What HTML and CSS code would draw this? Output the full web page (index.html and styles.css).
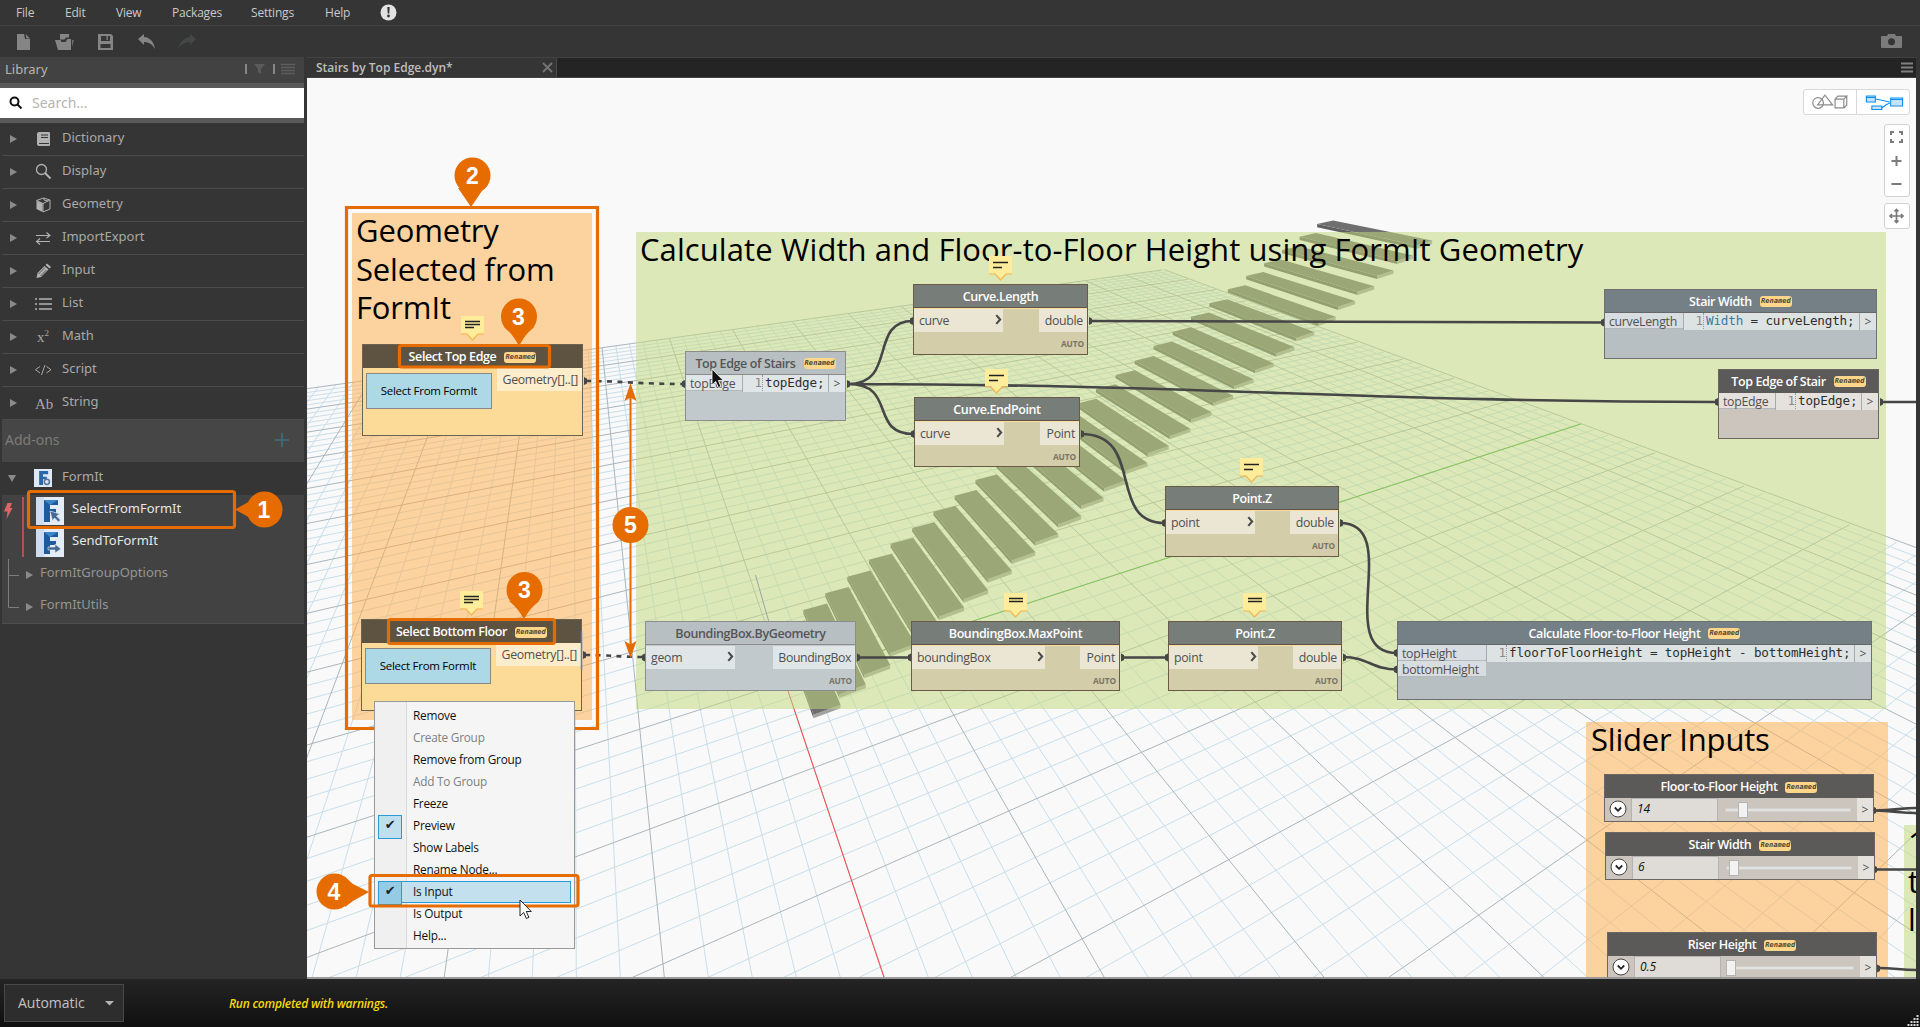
FILE: index.html
```html
<!DOCTYPE html>
<html lang="en">
<head>
<meta charset="utf-8">
<title>Dynamo - Stairs by Top Edge</title>
<link rel="stylesheet" href="styles.css">
</head>
<body>
<div class="app">
  <nav class="menubar">
    <span class="m-file">File</span><span class="m-edit">Edit</span><span class="m-view">View</span><span class="m-packages">Packages</span><span class="m-settings">Settings</span><span class="m-help">Help</span>
    <svg width="17" height="17" viewBox="0 0 17 17"><circle cx="8.500" cy="8.500" r="8" fill="#e2e2e2"/><path d="M7.300 3h2.400l-.4 6.400H7.700z" fill="#353535"/><circle cx="8.500" cy="12" r="1.400" fill="#353535"/></svg>
  </nav>
  <div class="toolbar">
    <svg width="210" height="31" viewBox="0 0 210 31" fill="#858585">
      <path d="M17 8h7l1 5h5v11H17z"/><path d="M25.500 8l4.500 4.500h-3.500z"/>
      <path d="M60 8h9v3.500h-3l-1.500 2H60z"/><path d="M55 14h5.500l1 2h4l2-3H71v11H58z"/><path d="M72 14h2l-2 7z" fill="#6d6d6d"/>
      <path d="M98 8h13l2 2v14H98z"/><path d="M101 10h9v5h-9zM100.500 18h10v4h-10z" fill="#353535"/><path d="M106.500 10h1.300v4h-1.300z"/>
      <path d="M138 13l6-5v3c6 .5 10 5 11 12-3-5-6-7-11-7v3z"/>
      <path d="M196 13l-6-5v3c-6 .5-10 5-12 12 3-5 7-7 12-7v3z" fill="#454747"/>
    </svg>
    <svg class="camera" width="22" height="15" viewBox="0 0 22 15"><path d="M0 3q0-1 1-1h5l1-2h7l1 2h5q1 0 1 1v10q0 1-1 1H1q-1 0-1-1z" fill="#7b7b7b"/><circle cx="10.500" cy="7.700" r="3.500" fill="#353535"/></svg>
  </div>
  <div class="middle">
    <aside class="sidebar">
      <div class="lib-head"><span>Library</span>
        <svg width="44" height="12" viewBox="0 0 44 12"><path d="M1 1v10M29 1v10" stroke="#a0a0a0" stroke-width="1.500"/><path d="M9 1h11l-4 5v5l-3-1.500V6z" fill="#5a5a5a"/></svg>
        <svg width="14" height="12" viewBox="0 0 14 12"><path d="M0 1.500h14M0 4.500h14M0 7.500h14M0 10.500h14" stroke="#5c5c5c" stroke-width="1.500"/></svg>
      </div>
      <div class="search"><svg width="14" height="14" viewBox="0 0 14 14" fill="none" stroke="#111" stroke-width="2"><circle cx="5.500" cy="5.500" r="4"/><path d="M8.500 8.500l4 4"/></svg><span>Search...</span></div>
      <ul class="cats">
        <li><i class="tri"></i><svg class="ic" viewBox="0 0 18 18"><path d="M4 2h10q1 0 1 1v12q0 1-1 1H4q-2 0-2-2V4q0-2 2-2z" fill="#b2b2b2"/><path d="M6 5h7M6 7.500h7M4 13.500h10" stroke="#353535"/></svg><b>Dictionary</b></li>
        <li><i class="tri"></i><svg class="ic" viewBox="0 0 18 18" fill="none" stroke="#b2b2b2"><circle cx="6.500" cy="6.500" r="5" stroke-width="1.300"/><path d="M10 10l5.500 5.500" stroke-width="2"/></svg><b>Display</b></li>
        <li><i class="tri"></i><svg class="ic" viewBox="0 0 18 18"><path d="M1.500 5l6 2.500v8.500l-6-3z" fill="#b2b2b2"/><path d="M1.500 4.500l7-2.500 6.500 2v9l-7 3V7.500zM8 7.500l7-3.500M9 2v2l4 1" fill="none" stroke="#b2b2b2"/></svg><b>Geometry</b></li>
        <li><i class="tri"></i><svg class="ic" viewBox="0 0 18 18" fill="none" stroke="#b2b2b2" stroke-width="1.100"><path d="M1 6.500h14M11.500 3.500l3.500 3-3.500 2.500M15 12.500H1.500M5 9.500l-3.500 3 3.500 3"/></svg><b>ImportExport</b></li>
        <li><i class="tri"></i><svg class="ic" viewBox="0 0 18 18" fill="#b2b2b2"><path d="M1.500 16l1-5 7-7 4 3.500-7.500 7.500z"/><path d="M10.500 3l1.500-1.500 4 3.500-1.500 1.500z"/><path d="M3.500 12l6.500-6.500M5.500 14l6-6" stroke="#353535" stroke-width=".7"/></svg><b>Input</b></li>
        <li><i class="tri"></i><svg class="ic" viewBox="0 0 18 18" stroke="#b2b2b2" stroke-width="1.600"><path d="M0 4h2M4 4h13M0 9h2M4 9h13M0 14h2M4 14h13"/></svg><b>List</b></li>
        <li><i class="tri"></i><em class="ic serif">x<sup>2</sup></em><b>Math</b></li>
        <li><i class="tri"></i><svg class="ic" viewBox="0 0 18 18" fill="none" stroke="#a8a8a8"><path d="M5 5.500L.5 8.700 5 12M11.500 5.500L16 8.700 11.500 12M10 4L6.500 14"/></svg><b>Script</b></li>
        <li><i class="tri"></i><em class="ic serif ab">Ab</em><b>String</b></li>
      </ul>
      <div class="addons"><span>Add-ons</span><svg width="14" height="14" viewBox="0 0 14 14"><path d="M7 0v14M0 7h14" stroke="#3f7080" stroke-width="1.600"/></svg></div>
      <div class="formit"><i class="tri down"></i>
        <svg width="18" height="18" viewBox="0 0 28 28"><rect width="28" height="28" fill="#dfe8f5"/><path d="M8 3h14v5h-8v4h6v4h-6v9H8z" fill="#2a68ab"/><circle cx="20" cy="20" r="4" fill="#dfe8f5" stroke="#5c7a9c" stroke-width="2.500"/></svg><b>FormIt</b></div>
      <div class="sub">
        <div class="leaf"><svg class="leaf-ic" viewBox="0 0 28 28"><rect width="28" height="28" fill="#e4ecf8"/><path d="M0 0h8v28H0z" fill="#cfdcf0"/><path d="M8 3h14v5h-8v4h6v4h-6v9H8z" fill="#1f5b9c"/><path d="M8 3h14l-8 5z" fill="#3d86c6"/><path d="M14 14l10 3-3.500 2 4 4-2 2-4-4-2 3z" fill="#47688f" stroke="#e4ecf8" stroke-width=".7"/></svg><b>SelectFromFormIt</b></div>
        <div class="leaf"><svg class="leaf-ic" viewBox="0 0 28 28"><rect width="28" height="28" fill="#e4ecf8"/><path d="M0 0h8v28H0z" fill="#cfdcf0"/><path d="M8 3h14v5h-8v4h6v4h-6v9H8z" fill="#1f5b9c"/><path d="M8 3h14l-8 5z" fill="#3d86c6"/><path d="M12 18h7v-3l6 5-6 4v-3h-7z" fill="#47688f" stroke="#e4ecf8" stroke-width=".6"/></svg><b>SendToFormIt</b></div>
        <div class="branch"><i class="tri"></i><b>FormItGroupOptions</b></div>
        <div class="branch"><i class="tri"></i><b>FormItUtils</b></div>
        <svg class="tree" width="30" height="128" viewBox="0 0 30 128"><path d="M7.500 8h4.500l-2 5h2.500L6.500 24l1-7.500H4z" fill="#e06464"/><path d="M23 2v60" stroke="#b25249" stroke-width="2"/><path d="M8.500 64v48.500H19M8.500 80.500H19" fill="none" stroke="#7d7d7d"/></svg>
      </div>
    </aside>
    <main class="workspace">
      <div class="tabs"><div class="tab"><span>Stairs by Top Edge.dyn*</span><svg width="11" height="11" viewBox="0 0 11 11"><path d="M1 1l9 9M10 1l-9 9" stroke="#757575" stroke-width="1.800"/></svg></div>
        <svg class="burger" width="12" height="11" viewBox="0 0 12 11"><path d="M0 1.500h12M0 5.500h12M0 9.500h12" stroke="#808080" stroke-width="1.800"/></svg></div>
      <div class="canvas">
        <svg class="layer" viewBox="307 78 1609 899">
          <g fill="none"><path id="minor" stroke="#c8deea"/><path id="major" stroke="#a9b6bd"/></g>
          <path d="M785 682L884.500 979" stroke="#ff4a4a" fill="none"/>
          <path d="M785 682L1581 424" stroke="#44b03a" fill="none"/>
          <path d="M786 682L755.500 575" stroke="#6868d8" fill="none"/>
          <g id="stairs"></g>
        </svg>
        <div class="world">
          <section class="group g-select"><h2>Geometry<br>Selected from<br>FormIt</h2></section>
          <section class="group g-calc"><h2>Calculate Width and Floor-to-Floor Height using FormIt Geometry</h2></section>
          <section class="group g-slider"><h2>Slider Inputs</h2></section>
          <section class="group g-edge"><h2>1<br>t<br>l</h2></section>
        </div>
        <svg class="layer" viewBox="307 78 1609 899" fill="none" stroke="#464646" stroke-width="2.600">
          <path stroke-dasharray="5 5.500" d="M586 381C620 381 640 384 684 384M585 655C610 655 620 657 644 657"/>
          <path d="M848 384C898 384 868 321 913 321M848 384C898 384 868 434 914 434M848 384C1180 384 1380 402 1718 402M1089 321C1270 321 1420 322.500 1604 322.500M1081 434C1146 434 1106 523 1165 523M857 657.500H911M1121 657.500H1168M1340 523C1404 523 1332 653 1397 653M1343 657C1368 657 1372 669.500 1397 669.500M1880 402H1916M1874 810.500C1895 810.500 1900 808 1916 808M1874 810.500C1895 811 1900 813 1916 813M1875 869.500H1916M1878 968C1895 968 1900 970 1916 970"/>
          <g id="dots" fill="#464646" stroke="none"></g>
        </svg>
        <div class="world">
          <article class="node select n-st"><h3>Select Top Edge<small>Renamed</small></h3><div class="sel"><button>Select From FormIt</button><span class="port">Geometry[]..[]</span></div></article>
          <article class="node select n-sb"><h3>Select Bottom Floor<small>Renamed</small></h3><div class="sel"><button>Select From FormIt</button><span class="port">Geometry[]..[]</span></div></article>
          <article class="node code frozen n-te"><h3>Top Edge of Stairs<small>Renamed</small></h3><div class="row"><div class="ins"><span>topEdge</span></div><pre><u>1</u>topEdge;</pre><span class="gt">&gt;</span></div></article>
          <article class="node fn n-cl"><h3>Curve.Length</h3><div class="ports"><span class="port in">curve<svg class="chev" viewBox="0 0 6 10"><path d="M1 1l3.500 4L1 9"/></svg></span><span class="port">double</span></div><footer>AUTO</footer></article>
          <article class="node fn n-ce"><h3>Curve.EndPoint</h3><div class="ports"><span class="port in">curve<svg class="chev" viewBox="0 0 6 10"><path d="M1 1l3.500 4L1 9"/></svg></span><span class="port">Point</span></div><footer>AUTO</footer></article>
          <article class="node fn n-p1"><h3>Point.Z</h3><div class="ports"><span class="port in">point<svg class="chev" viewBox="0 0 6 10"><path d="M1 1l3.500 4L1 9"/></svg></span><span class="port">double</span></div><footer>AUTO</footer></article>
          <article class="node fn frozen n-bg"><h3>BoundingBox.ByGeometry</h3><div class="ports"><span class="port in">geom<svg class="chev" viewBox="0 0 6 10"><path d="M1 1l3.500 4L1 9"/></svg></span><span class="port">BoundingBox</span></div><footer>AUTO</footer></article>
          <article class="node fn n-bm"><h3>BoundingBox.MaxPoint</h3><div class="ports"><span class="port in">boundingBox<svg class="chev" viewBox="0 0 6 10"><path d="M1 1l3.500 4L1 9"/></svg></span><span class="port">Point</span></div><footer>AUTO</footer></article>
          <article class="node fn n-p2"><h3>Point.Z</h3><div class="ports"><span class="port in">point<svg class="chev" viewBox="0 0 6 10"><path d="M1 1l3.500 4L1 9"/></svg></span><span class="port">double</span></div><footer>AUTO</footer></article>
          <article class="node code n-sw"><h3>Stair Width<small>Renamed</small></h3><div class="row"><div class="ins"><span>curveLength</span></div><pre><u>1</u><mark>Width</mark> = curveLength;</pre><span class="gt">&gt;</span></div></article>
          <article class="node code warm n-ts"><h3>Top Edge of Stair<small>Renamed</small></h3><div class="row"><div class="ins"><span>topEdge</span></div><pre><u>1</u>topEdge;</pre><span class="gt">&gt;</span></div></article>
          <article class="node code n-cf"><h3>Calculate Floor-to-Floor Height<small>Renamed</small></h3><div class="row"><div class="ins"><span>topHeight</span><span>bottomHeight</span></div><pre><u>1</u>floorToFloorHeight = topHeight - bottomHeight;</pre><span class="gt">&gt;</span></div></article>
          <article class="node slider n-s1"><h3>Floor-to-Floor Height<small>Renamed</small></h3><div class="row"><svg class="knob" viewBox="0 0 18 18"><circle cx="9" cy="9" r="8" fill="#fff" stroke="#444"/><path d="M5.800 7.500L9 10.800l3.200-3.300" fill="none" stroke="#222" stroke-width="1.800"/></svg><span class="val">14</span><div class="track t1"><i></i></div><span class="gt">&gt;</span></div></article>
          <article class="node slider n-s2"><h3>Stair Width<small>Renamed</small></h3><div class="row"><svg class="knob" viewBox="0 0 18 18"><circle cx="9" cy="9" r="8" fill="#fff" stroke="#444"/><path d="M5.800 7.500L9 10.800l3.200-3.300" fill="none" stroke="#222" stroke-width="1.800"/></svg><span class="val">6</span><div class="track t2"><i></i></div><span class="gt">&gt;</span></div></article>
          <article class="node slider n-s3"><h3>Riser Height<small>Renamed</small></h3><div class="row"><svg class="knob" viewBox="0 0 18 18"><circle cx="9" cy="9" r="8" fill="#fff" stroke="#444"/><path d="M5.800 7.500L9 10.800l3.200-3.300" fill="none" stroke="#222" stroke-width="1.800"/></svg><span class="val">0.5</span><div class="track t3"><i></i></div><span class="gt">&gt;</span></div></article>
          <div class="view-switch">
            <svg viewBox="0 0 53 25" fill="none" stroke="#8a8a8a" stroke-width="1.200"><circle cx="14.500" cy="13" r="5.500"/><path d="M14 15l7.500-10 8 10zM32 9h9v9h-9zM32 9l3-3h9l-3 3M44 6v9l-3 3"/></svg>
            <svg viewBox="0 0 53 25" fill="#c5e4fb" stroke="#0c8df0" stroke-width="1.100"><path d="M19 9l14 3M25 18l4-3 4-2" fill="none"/><path d="M9.500 6h9v6h-9zM9.500 7.500h9M34 8h12v8H34zM34 9.500h12M15 16h10v3.500H15z"/></svg>
          </div>
          <div class="zoomer z-main">
            <svg viewBox="0 0 24 72" fill="none" stroke="#7b7b7b" stroke-width="2"><path d="M6 10V7h3M14 7h3v3M17 14v3h-3M9 17H6v-3M11.500 31v10M6.500 36h10M6.500 59h10"/></svg>
          </div>
          <div class="zoomer z-pan"><svg viewBox="0 0 24 24" fill="none" stroke="#7b7b7b" stroke-width="1.700"><path d="M11.500 6v12M5.500 12h12M9.500 7.500l2-2 2 2M9.500 16.500l2 2 2-2M7 10l-2 2 2 2M16 10l2 2-2 2"/></svg></div>
        </div>
        <svg class="layer" viewBox="307 78 1609 899"><g id="notes"></g></svg>
        <div class="world">
          <ul class="ctx">
            <li>Remove</li><li class="off">Create Group</li><li>Remove from Group</li><li class="off">Add To Group</li><li>Freeze</li><li class="chk">Preview</li><li>Show Labels</li><li>Rename Node...</li><li class="chk hot">Is Input</li><li>Is Output</li><li>Help...</li>
          </ul>
        </div>
      </div>
    </main>
  </div>
  <footer class="status"><div class="run-mode"><span>Automatic</span><svg width="9" height="5" viewBox="0 0 9 5"><path d="M0 0h9L4.500 4.500z" fill="#b5b5b5"/></svg></div><em>Run completed with warnings.</em>
    <svg width="12" height="12" viewBox="0 0 12 12" fill="#d8d8d8"><path d="M9.500 0h2v2h-2zM9.500 3h2v2h-2zM9.500 6h2v2h-2zM9.500 9h2v2h-2zM6.500 3h2v2h-2zM6.500 6h2v2h-2zM6.500 9h2v2h-2zM3.500 6h2v2h-2zM3.500 9h2v2h-2zM.5 9h2v2h-2z"/></svg>
  </footer>
  <svg class="overlay" viewBox="0 0 1920 1027">
    <g fill="none" stroke="#e66c00" stroke-width="3.200"><path d="M374 728.500H346.500V207.500H597.500V728.500H575"/><rect x="399.500" y="345.500" width="150" height="21.500" rx="2"/><rect x="388.500" y="619.500" width="166" height="24" rx="2"/><rect x="28.500" y="491.500" width="206" height="36" rx="2"/><rect x="370" y="875.500" width="208" height="30.500" rx="2"/><path d="M630.500 390v262" stroke-width="2"/></g>
    <g fill="#e66c00"><path d="M630.500 383l6 18-6-3.500-6 3.500zM630.500 658l-6-17 6 3.500 6-3.500z"/><path d="M458 188L471 207l13-19zM235 509.500l16-9 8-7v31l-8-6zM369 892l-16-8-8-7v30l8-6z"/><path d="M504 327q8 6 15 19 7-13 15-19zM509 601q8 6 15 18 7-12 15-18z"/>
      <circle cx="472.500" cy="175.500" r="18"/><circle cx="519" cy="316.500" r="18"/><circle cx="524.500" cy="590" r="18"/><circle cx="264.500" cy="509.500" r="18"/><circle cx="334.500" cy="891.500" r="18"/><circle cx="630.500" cy="525" r="18"/></g>
    <g class="pin"><text x="472.500" y="183.500">2</text><text x="518.500" y="324.500">3</text><text x="524.500" y="597.500">3</text><text x="264" y="517.500">1</text><text x="334" y="899.500">4</text><text x="630.500" y="533">5</text></g>
    <path d="M581.500 631v39" stroke="#4a86be" stroke-width="1.500"/>
    <path d="M712 369v16l3.700-3.500 2.700 6 2.500-1.100-2.600-5.900h5z" fill="#111" stroke="#fff" stroke-width=".8"/>
    <path d="M520 900v16l3.700-3.500 2.700 6 2.500-1.100-2.600-5.900h5z" fill="#fff" stroke="#111" stroke-width=".9"/>
  </svg>
</div>
<script src="scene.js"></script>
</body>
</html>
```
FILE: scene.js
```js
// Perspective ground grid: 20 x 20 major cells, five minor steps in each.
function project(u, v) {
  const w = 1 - 0.1196 * u + 0.0697 * v;
  if (w < 0.03) return null;
  return [(785 - 68.5 * u + 189.8 * v) / w, (682 - 6.1 * u + 3.7 * v) / w];
}
function segment(fixed, alongU) {
  let first = null, last = null;
  for (let t = -10; t <= 10; t += 0.05) {
    const p = alongU ? project(t, fixed) : project(fixed, t);
    if (!p) continue;
    if (!first) first = p;
    last = p;
  }
  if (!first) return '';
  return `M${first[0].toFixed(1)} ${first[1].toFixed(1)}L${last[0].toFixed(1)} ${last[1].toFixed(1)}`;
}
let minor = '', major = '';
for (let i = -50; i <= 50; i++) {
  const d = segment(i / 5, true) + segment(i / 5, false);
  if (i % 5 === 0) major += d; else minor += d;
}
document.getElementById('minor').setAttribute('d', minor);
document.getElementById('major').setAttribute('d', major);

// Stair treads, bottom to top: back-left corner and front-left corner.
const back = [[781.2,626.7],[803.3,610],[825.3,593.3],[847.3,576.7],[869,559.7],[890.6,543.7],[912.2,528],[933.5,511.7],[954.7,495.7],[975.5,480],[996.3,464.3],[1016.7,449],[1036.7,433.7],[1056.7,418.7],[1076.3,403.7],[1096,389],[1115.5,375],[1134.7,360.7],[1153.5,346],[1172.7,331.7],[1191,316.7],[1209.4,303.3],[1227.8,289.3],[1246.1,276],[1264.1,263.3],[1282,250],[1299.6,236.7],[1317.1,224]];
const front = [[813.5,718.3],[839.2,698],[864.1,678.3],[889.8,656.7],[914.3,638.3],[939.2,620],[963.7,602.7],[987.8,582.7],[1011.8,564],[1035.1,545.7],[1058.4,527.7],[1081.2,509.3],[1104.1,491.7],[1126.1,474],[1147.8,456.7],[1169.8,439.3],[1191.4,422.7],[1213.5,406],[1234.3,389.3],[1255.1,373.3],[1275.9,356.7],[1296.3,341.3],[1318,326],[1338,310],[1357.6,295],[1377.1,279],[1397.1,264],[1416.7,248.7]];
let stairs = '';
for (let i = back.length - 1; i >= 0; i--) {
  const t = i / (back.length - 1), th = 3.6 - 0.4 * t;
  const [ax, ay] = back[i], [dx, dy0] = front[i], dy = dy0 - th;
  const bx = ax + 24 - 8 * t, by = ay - 6.5 + 3 * t;
  const cx = dx + 27 - 11.5 * t, cy = dy - 10 + 5 * t;
  stairs += `<path fill="#606060" d="M${ax} ${ay}L${dx} ${dy}v${th}L${ax} ${ay + th}z"/>`
    + `<path fill="#a2a2a0" d="M${dx} ${dy}L${cx} ${cy}v${th}L${dx} ${dy + th}z"/>`
    + `<path fill="#6f6f6f" d="M${ax} ${ay}L${bx} ${by}L${cx} ${cy}L${dx} ${dy}z"/>`;
}
document.getElementById('stairs').innerHTML = stairs;

// Half-round connector terminals; the third value is the side they point to.
const ends = [[584,381,1],[583,655,1],[685,384,-1],[645,657.5,-1],[847,384,1],[913,321,-1],[1089,321,1],[914,434,-1],[1081,434,1],[1165,523,-1],[1340,523,1],[857,657.5,1],[911,657.5,-1],[1121,657.5,1],[1168,657.5,-1],[1343,657.5,1],[1397,653,-1],[1397,669.5,-1],[1604,322.5,-1],[1718,402,-1],[1880,402,1],[1873,810.5,1],[1874,869.5,1],[1877,968.5,1]];
document.getElementById('dots').innerHTML = ends.map(([x, y, s]) =>
  `<path d="M${x} ${y - 4}l${s * 3} 1.500v5l${-s * 3} 1.500z"/>`).join('');

// Note markers; the third value picks the arrangement of the text lines.
const notes = [[461,316,2],[460,591,2],[989,256,1],[985,369,1],[1240,458,1],[1004,593,0],[1243,593,0]];
document.getElementById('notes').innerHTML = notes.map(([x, y, k]) => {
  const lines = k === 2 ? 'M4 5.500h15M4 8.500h15M4 11.500h9' : k === 1 ? 'M4 6.500h15M4 11.500h9' : 'M5 5.500h14M5 8.500h14';
  return `<g transform="translate(${x} ${y})"><path d="M0 0h23v17.500h-6l-5.500 6-5.500-6H0z" fill="#fdec9a"/><path d="M0 18h6l5.500 6 5.500-6h6" fill="none" stroke="#f3b650" stroke-width="1.200"/><path d="${lines}" stroke="#222" stroke-width="1.300"/></g>`;
}).join('');
```
FILE: styles.css
```css
*{box-sizing:border-box}
body{margin:0;background:#353535;font-family:"Open Sans",sans-serif;overflow:hidden}
ul{list-style:none;margin:0;padding:0}
h2,h3,pre{margin:0;font-weight:400}
.app{position:relative;width:1920px;height:1027px;display:flex;flex-direction:column}
.menubar{height:26px;border-bottom:1px solid #424242;display:flex;align-items:center;padding-left:16px;font-size:12px;color:#c9c9c9}
.menubar span{letter-spacing:-.2px}
.m-file{width:49px}.m-edit{width:51px}.m-view{width:56px}.m-packages{width:79px}.m-settings{width:74px}.m-help{width:55px}
.toolbar{height:31px;display:flex;justify-content:space-between;align-items:center}
.camera{margin-right:17px}
.middle{height:922px;display:flex}
.sidebar{width:304px;margin-right:3px;font-family:"Noto Sans","Open Sans",sans-serif;color:#a9a9a9;font-size:13px}
.sidebar b{font-weight:400}
.lib-head{height:26px;background:#424242;display:flex;align-items:center;padding:0 9px 2px 5px;font-size:13px;color:#b5b5b5}
.lib-head span{flex:1}
.lib-head svg:last-child{margin-left:-8px}
.search{height:40px;background:#fff;border:solid #5a5a5a;border-width:5px 0;display:flex;align-items:center;padding-left:9px;gap:9px;color:#b4b4b4;font-size:14px}
.search span{padding-bottom:2px}
.cats li{height:33px;display:flex;align-items:center;margin-left:2px;padding:0 0 3px 8px;border-bottom:1px solid #4b4b4b}
.cats b{padding-bottom:1px}
.tri{width:0;height:0;border:solid transparent;border-width:4px 0 4px 7px;border-left-color:#8a8a8a;margin-top:3px}
.tri.down{border-width:7px 4px 0;border-color:#8a8a8a transparent transparent;margin-top:0}
.ic{width:18px;height:18px;margin:3px 9px 0 18px;flex:none}
.serif{font:15px/18px "Liberation Serif",serif;color:#a8a8a8;padding-left:2px}
.serif sup{font-size:9px;line-height:0}
.ab{padding-left:0;font-size:15px;margin-top:5px}
.addons{height:42px;margin-left:2px;background:#464646;display:flex;align-items:center;justify-content:space-between;padding:0 14px 0 3px;font-size:14px;color:#7c7c7c}
.addons span{padding-bottom:4px}
.addons svg{margin-bottom:2px;margin-right:1px}
.formit{height:33px;display:flex;align-items:center;padding-left:8px}
.formit svg{margin:0 10px 2px 18px}
.formit b{padding-bottom:6px}
.sub{position:relative;height:129px;margin-left:2px;background:#424242;border-bottom:1px solid #4e4e4e;font-size:13px}
.leaf{height:32px;display:flex;align-items:center;gap:8px;padding-left:34px;color:#e6e6e6}
.leaf b{padding-bottom:6px}
.leaf-ic{width:28px;height:28px}
.branch{height:32px;display:flex;align-items:center;gap:7px;padding:0 0 3px 24px;color:#959595}
.branch b{padding-bottom:3px}
.tree{position:absolute;left:-2px;top:0}
.workspace{width:1609px;display:flex;flex-direction:column}
.tabs{height:21px;background:#242424;border:solid #424242;border-width:1px 0 1px 0;display:flex;align-items:center;justify-content:space-between;padding-right:3px}
.tab{width:250px;height:19px;background:#353535;border-right:1px solid #4a4a4a;display:flex;align-items:center;justify-content:space-between;padding:0 3px 0 9px;font-size:12px;font-weight:600;color:#bfbfbf}
.canvas{position:relative;height:901px;background:#f9f9f9;overflow:hidden;border-bottom:2px solid #999}
.layer{position:absolute;left:0;top:0;width:1609px;height:899px}
.world{position:absolute;left:-307px;top:-78px;width:1920px;height:1027px}
.group{position:absolute}
.group h2{font-size:31px;line-height:38.5px;color:#000;white-space:nowrap;padding-left:4px;letter-spacing:.08px;margin-top:-2px}
.g-select{left:352px;top:213px;width:240px;height:507px;background:rgba(255,175,80,.53)}
.g-select h2{letter-spacing:-.15px}
.g-calc{left:636px;top:232px;width:1250px;height:477px;background:rgba(194,217,126,.53)}
.g-slider{left:1586px;top:722px;width:302px;height:255px;background:rgba(255,175,80,.53)}
.g-slider h2{padding-left:5px;letter-spacing:-.2px}
.g-edge{left:1904px;top:825px;width:12px;height:152px;background:rgba(194,217,126,.53);overflow:hidden}
.node{position:absolute;border:1px solid #6b5a45;font-size:12.300px;color:#505050;display:flex;flex-direction:column}
.node h3{height:23px;flex:none;display:flex;align-items:center;justify-content:center;gap:8px;font-size:12.500px;font-weight:600;color:#fff;white-space:nowrap;letter-spacing:-.4px}
.node h3 small{background:#ffd68a;border-radius:3px;color:#4c4533;font:italic 700 7px/11px "DejaVu Sans Mono",monospace;padding:0 1px;width:32px;text-align:center;height:11px;letter-spacing:.05px;margin-top:1px}
.ports{display:flex;justify-content:space-between;margin-top:1px}
.port{height:23px;line-height:23px;padding:0 4px 0 5px;background:#eae6d3;white-space:nowrap;letter-spacing:-.28px}
.fn .port:last-child{min-width:48px;text-align:right}
.in{display:flex;justify-content:space-between;align-items:center;width:89px;padding:0 1px 0 5px}
.fn.n-ce .port:last-child,.fn.n-bm .port:last-child{min-width:39px}
.chev{width:7px;height:11px;fill:none;stroke:#4a4a4a;stroke-width:1.900;margin-bottom:2px}
.fn{background:#d4cda9}
.fn h3{background:#777d79;border-bottom:1px solid #5f5443}
.fn .ports{border-top:1px solid #f8dca2;margin-top:0}
.node footer{text-align:right;font-size:8.300px;font-weight:700;color:#777468;padding:6px 3px 0 0;letter-spacing:-.1px}
.select{background:#fcdb98;border-color:#6b6450}
.select h3{background:#5e5340}
.sel{display:flex;justify-content:space-between;padding-left:3px}
.sel button{width:126px;height:36px;margin:5px 0 0;border:1px solid #888;background:#add8e6;font:11.500px "Open Sans",sans-serif;letter-spacing:-.28px;padding:0 0 2px;color:#000}
.sel .port{background:#fdedcb;width:85px;text-align:right;letter-spacing:-.3px}
.n-sb .port{line-height:24px}
.code{background:#b7bfc2;border-color:#707070}
.code h3{background:#758086;border-bottom:1px solid #666}
.row{display:flex}
.ins{width:56px}
.n-cf .ins{width:88px}
.n-sw .ins{width:78px}
.ins span{display:block;height:16px;line-height:17px;background:#d8dde1;padding:0 4px;border-bottom:1px solid #b2b8bb;white-space:nowrap;letter-spacing:-.28px;color:#505050}
.code pre{flex:1;height:17px;background:#dde3e3;font:12.600px/16px "DejaVu Sans Mono",monospace;letter-spacing:-.16px;color:#2e2e2e;border:solid #a6acae;border-width:0 1px;white-space:nowrap}
.code u{display:inline-block;width:20px;text-align:right;text-decoration:none;color:#8a8a8a;border-right:1px dotted #999;margin-right:2px}
.code mark{background:none;color:#3a7a9c}
.gt{width:16px;height:17px;line-height:17px;text-align:center;font-size:12px;background:#dde3e3}
.warm{background:#cbc5be;border-color:#6b6662}
.warm h3,.slider h3{background:#5c5a58;border-color:#5c5a58}
.warm pre,.warm .gt,.warm .ins span{background:#e5e2de}
.frozen{background:#c2c9cd;border-color:#8c8c8c}
.frozen h3{background:#b8bfc2;color:#555;border-color:#8c8c8c}
.frozen .port,.frozen pre,.frozen .gt,.frozen .ins span{background:#e0e6e7}
.frozen .ports{border-color:#c2c9cd}
.n-bg .port:last-child{letter-spacing:-.4px}
.slider{background:#cbc5be;border-color:#6b6662}
.slider .row{height:23px;align-items:center}
.knob{width:18px;height:18px;margin:0 4px 1px 4px;flex:none}
.val{width:87px;height:23px;background:#dfdcd7;border:solid #b3b3b3;border-width:1px 1px 0;font-style:italic;font-size:12px;line-height:20px;color:#111;padding-left:5px}
.track{width:126px;height:4px;background:#e2e2e0;border:1px solid #d2d0cd;margin:0 6px 0 7px;position:relative}
.track i{position:absolute;top:-7px;width:10px;height:16px;background:#f2f2f2;border:1px solid #b3b3b3}
.t1 i{left:12px}.t2 i{left:2px}.t3 i{left:-3px}
.slider .gt{height:23px;line-height:23px;background:#e5e2de}
.n-st{left:362px;top:344px;width:221px;height:92px}
.n-sb{left:361px;top:619px;width:221px;height:92px}
.n-te{left:685px;top:351px;width:161px;height:70px}
.n-cl{left:913px;top:284px;width:175px;height:71px}
.n-ce{left:914px;top:397px;width:166px;height:70px}
.n-p1{left:1165px;top:486px;width:174px;height:71px}
.n-bg{left:645px;top:621px;width:211px;height:70px}
.n-bm{left:911px;top:621px;width:209px;height:70px}
.n-bm .in{width:133px}
.n-p2{left:1168px;top:621px;width:174px;height:70px}
.n-sw{left:1604px;top:289px;width:273px;height:70px}
.n-ts{left:1718px;top:369px;width:161px;height:70px}
.n-cf{left:1397px;top:621px;width:475px;height:79px}
.n-s1{left:1604px;top:774px;width:270px;height:48px}
.n-s2{left:1605px;top:832px;width:270px;height:48px}
.n-s3{left:1607px;top:932px;width:270px;height:48px}
.view-switch{position:absolute;left:1803px;top:89px;width:107px;height:26px;display:flex;background:#fff;border:1px solid #d8d8d8;border-radius:3px}
.view-switch svg{width:53px;height:25px}
.view-switch svg:first-child{border-right:1px solid #d8d8d8}
.zoomer{position:absolute;left:1884px;width:26px;background:#fff;border:1px solid #d2d2d2;border-radius:3px}
.zoomer svg{display:block;width:24px}
.z-main{top:124px;height:73px}
.z-pan{top:203px;height:26px}
.ctx{position:absolute;left:374px;top:701px;width:201px;height:248px;background:linear-gradient(90deg,#f0f0f0 31px,#d9d9d9 31px,#d9d9d9 32px,#f5f5f5 32px);border:1px solid #999;padding:3px}
.ctx li{height:22px;line-height:18px;font-size:11.800px;color:#111;padding-left:34px;border:1px solid transparent;letter-spacing:-.22px;position:relative}
.ctx .off{color:#808080}
.ctx .chk::before{content:"✔";font:13px/18px "DejaVu Sans",sans-serif;position:absolute;left:-1px;top:-1px;width:22px;height:22px;text-align:center;background:#bfdfee;border:1px solid #2a9bd8;color:#222}
.ctx .hot{background:#c3e0ef;border-color:#2a9bd8}
.ctx .hot::before{background:#96cbe6}
.status{height:48px;background:linear-gradient(#242424,#101010);display:flex;align-items:center;padding:0 1px 0 4px}
.run-mode{width:120px;height:38px;background:#2d2d2d;border:1px solid #484848;display:flex;align-items:center;justify-content:space-between;padding:0 9px 0 13px;font-size:14px;color:#c2c2c2}
.run-mode span{padding-bottom:2px}
.status em{flex:1;margin-left:105px;font-size:12px;color:#f6d90f;font-weight:600;letter-spacing:-.23px}
.status>svg{align-self:flex-end}
.overlay{position:absolute;left:0;top:0;width:1920px;height:1027px;pointer-events:none}
.pin text{font:700 23px "Liberation Sans",sans-serif;fill:#fff;text-anchor:middle}
```
